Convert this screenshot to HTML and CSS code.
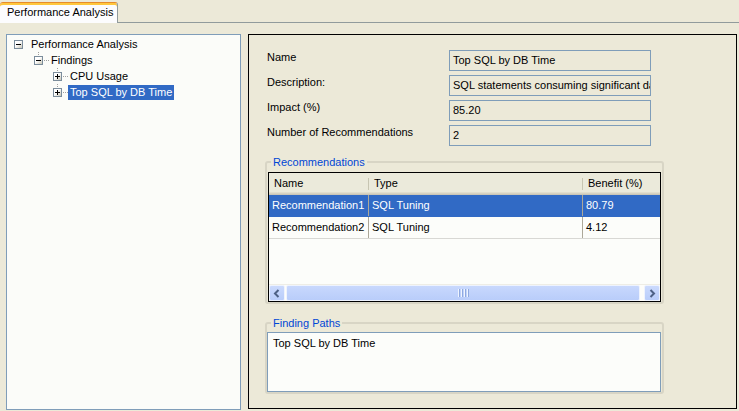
FILE: index.html
```html
<!DOCTYPE html>
<html>
<head>
<meta charset="utf-8">
<title>Performance Analysis</title>
<link rel="stylesheet" href="styles.css">
</head>
<body>
<div class="tabbar">
  <div class="tab">Performance Analysis</div>
  <div class="tab-rest"></div>
</div>
<div class="content">
  <div class="tree">
    <div class="node l0">
      <span class="exp minus"></span><span class="conn"></span><span class="lbl">Performance Analysis</span>
    </div>
    <div class="node l1">
      <span class="exp minus child"></span><span class="conn dotted"></span><span class="lbl">Findings</span>
    </div>
    <div class="node l2">
      <span class="exp plus child cont"></span><span class="conn dotted"></span><span class="lbl">CPU Usage</span>
    </div>
    <div class="node l2">
      <span class="exp plus child"></span><span class="conn dotted"></span><span class="lbl sel">Top SQL by DB Time</span>
    </div>
  </div>

  <div class="detail">
    <div class="form">
      <div class="flabel">Name</div>
      <div class="field">Top SQL by DB Time</div>
      <div class="flabel">Description:</div>
      <div class="field">SQL statements consuming significant database time were found.</div>
      <div class="flabel">Impact (%)</div>
      <div class="field">85.20</div>
      <div class="flabel">Number of Recommendations</div>
      <div class="field">2</div>
    </div>

    <fieldset class="group rec">
      <legend>Recommendations</legend>
      <div class="table">
        <div class="thead">
          <div class="th c1">Name</div>
          <div class="th c2">Type</div>
          <div class="th c3">Benefit (%)</div>
        </div>
        <div class="row sel">
          <div class="td c1">Recommendation1</div>
          <div class="td c2">SQL Tuning</div>
          <div class="td c3">80.79</div>
        </div>
        <div class="row">
          <div class="td c1">Recommendation2</div>
          <div class="td c2">SQL Tuning</div>
          <div class="td c3">4.12</div>
        </div>
        <div class="tbody-empty"></div>
        <div class="hscroll">
          <div class="sbtn">
            <svg width="8" height="9" viewBox="0 0 8 9"><path d="M5.5 1 L2 4.5 L5.5 8" fill="none" stroke="#4d6185" stroke-width="2"/></svg>
          </div>
          <div class="thumb">
            <div class="grip"><i></i><i></i><i></i><i></i></div>
          </div>
          <div class="sbtn">
            <svg width="8" height="9" viewBox="0 0 8 9"><path d="M2.5 1 L6 4.5 L2.5 8" fill="none" stroke="#4d6185" stroke-width="2"/></svg>
          </div>
        </div>
      </div>
    </fieldset>

    <fieldset class="group paths">
      <legend>Finding Paths</legend>
      <div class="textarea">Top SQL by DB Time</div>
    </fieldset>
  </div>
</div>
</body>
</html>
```

FILE: styles.css
```css
* { box-sizing: border-box; }

html, body {
  margin: 0;
  padding: 0;
}

body {
  width: 739px;
  height: 411px;
  overflow: hidden;
  background: #ece9d8;
  font-family: "Liberation Sans", Arial, sans-serif;
  font-size: 11px;
  color: #000;
}

/* ---------- tab bar ---------- */
.tabbar {
  display: flex;
  height: 23px;
  padding-top: 2px;
}

.tab {
  width: 118px;
  height: 21px;
  padding-left: 7px;
  line-height: 18px;
  background: #fcfcfe;
  border-top: 1px solid #e68b2c;
  border-right: 1px solid #919b9c;
  border-radius: 3px 3px 0 0;
  box-shadow: inset 0 2px 0 #ffc73c;
  white-space: nowrap;
}

.tab-rest {
  flex: 1;
  height: 21px;
  border-bottom: 1px solid #919b9c;
}

/* ---------- content ---------- */
.content {
  display: flex;
  align-items: flex-start;
  gap: 7px;
  padding: 11px 2px 1px 6px;
}

/* ---------- tree ---------- */
.tree {
  width: 235px;
  height: 376px;
  border: 1px solid #7f9db9;
  background: #fbfcf9;
  padding-top: 1px;
}

.node {
  display: flex;
  align-items: center;
  height: 16px;
}

.node.l0 { padding-left: 7px; }
.node.l1 { padding-left: 27px; }
.node.l2 { padding-left: 46px; }

.exp {
  position: relative;
  width: 9px;
  height: 9px;
  flex: none;
  border: 1px solid #7b8d9c;
  background: linear-gradient(135deg, #ffffff 0%, #ffffff 40%, #c9c6b6 100%);
}

.exp::before {
  content: "";
  position: absolute;
  left: 1px;
  top: 3px;
  width: 5px;
  height: 1px;
  background: #000;
}

.exp.plus::after {
  content: "";
  position: absolute;
  left: 3px;
  top: 1px;
  width: 1px;
  height: 5px;
  background: #000;
}

/* dotted connector above child boxes */
.exp.child .up,
.exp.child { }

.node.l1 .exp,
.node.l2 .exp {
  box-shadow: none;
}

.conn {
  width: 6px;
  flex: none;
}

.conn.dotted {
  width: 5px;
  margin-left: 1px;
  height: 1px;
  background-image: linear-gradient(to right, #a0a0a0 50%, transparent 50%);
  background-size: 2px 1px;
}

.node.l1, .node.l2 { position: relative; }

.node.l1::before,
.node.l2::before {
  content: "";
  position: absolute;
  top: 0;
  width: 1px;
  height: 4px;
  background-image: linear-gradient(to bottom, #a0a0a0 50%, transparent 50%);
  background-size: 1px 2px;
}

.node.l1::before { left: 31px; }
.node.l2::before { left: 50px; }

.exp.cont::after { }

.node.l2 .exp.cont {
  overflow: visible;
}

.lbl {
  padding: 0 2px;
  line-height: 15px;
  white-space: nowrap;
}

.lbl.sel {
  background: #316ac5;
  color: #fff;
}

/* ---------- detail panel ---------- */
.detail {
  width: 489px;
  height: 375px;
  border: 1px solid #000;
  padding: 15px 0 0 16px;
}

.form {
  display: grid;
  grid-template-columns: 182px 202px;
  row-gap: 4px;
  margin-left: 2px;
}

.flabel {
  height: 21px;
  line-height: 14px;
  white-space: nowrap;
}

.field {
  height: 21px;
  border: 1px solid #7f9db9;
  padding-left: 3px;
  line-height: 19px;
  white-space: nowrap;
  overflow: hidden;
}

/* ---------- group boxes ---------- */
.group {
  width: 399px;
  margin: 0;
  border: 2px solid #d8d5c5;
  border-radius: 3px;
  padding: 0 1px;
  min-width: 0;
}

.group legend {
  color: #0046d5;
  line-height: 14px;
  padding: 0 2px;
  margin-left: 3px;
}

.group.rec {
  margin-top: 9px;
  padding-top: 3px;
}

.group.paths {
  margin-top: 12px;
  padding-top: 2px;
}

/* ---------- table ---------- */
.table {
  height: 130px;
  border: 1px solid #000;
  background: #fcfdfa;
  display: flex;
  flex-direction: column;
}

.thead {
  display: flex;
  height: 22px;
  background: #ebeadb;
  box-shadow: inset 0 -1px 0 #cbc7b8, inset 0 -2px 0 #d6d2c2, inset 0 -3px 0 #e2decd;
}

.th {
  position: relative;
  line-height: 20px;
  padding-left: 5px;
  white-space: nowrap;
}

.th + .th::before {
  content: "";
  position: absolute;
  left: -1px;
  top: 5px;
  width: 1px;
  height: 12px;
  background: #c7c5b2;
}

.c1 { width: 100px; flex: none; }
.c2 { width: 214px; flex: none; }
.c3 { flex: 1; }

.row {
  display: flex;
  height: 22px;
  border-bottom: 1px solid #d8d8d4;
}

.td {
  padding-left: 3px;
  line-height: 21px;
  white-space: nowrap;
  overflow: hidden;
}

.td.c1, .td.c2 {
  border-right: 1px solid #aca899;
}

.row.sel {
  background: #316ac5;
  color: #fff;
  border-bottom-color: #316ac5;
}

.tbody-empty {
  flex: 1;
}

/* ---------- horizontal scrollbar ---------- */
.hscroll {
  display: flex;
  align-items: center;
  height: 17px;
  border-top: 1px solid #eeede5;
  background: #fdfdfa;
}

.sbtn {
  width: 16px;
  height: 16px;
  flex: none;
  display: flex;
  align-items: center;
  justify-content: center;
  border: 1px solid #eef3fe;
  border-radius: 2px;
  background: linear-gradient(to bottom, #cbdafd, #b9cdfa);
}

.thumb {
  flex: 1;
  height: 16px;
  margin: 0 4px 0 1px;
  display: flex;
  align-items: center;
  justify-content: center;
  border: 1px solid #eef3fe;
  border-radius: 2px;
  background: linear-gradient(to bottom, #c8d8fd, #b9cdfa);
}

.grip {
  display: flex;
  gap: 1px;
  height: 8px;
}

.grip i {
  display: block;
  width: 1px;
  height: 8px;
  background: #eef4fe;
  box-shadow: 1px 0 0 #8fa9e0;
  margin-right: 1px;
}

/* ---------- text area ---------- */
.textarea {
  height: 60px;
  border: 1px solid #7f9db9;
  background: #fcfdfa;
  padding: 3px 5px;
  line-height: 14px;
  margin-left: -1px;
}
```
